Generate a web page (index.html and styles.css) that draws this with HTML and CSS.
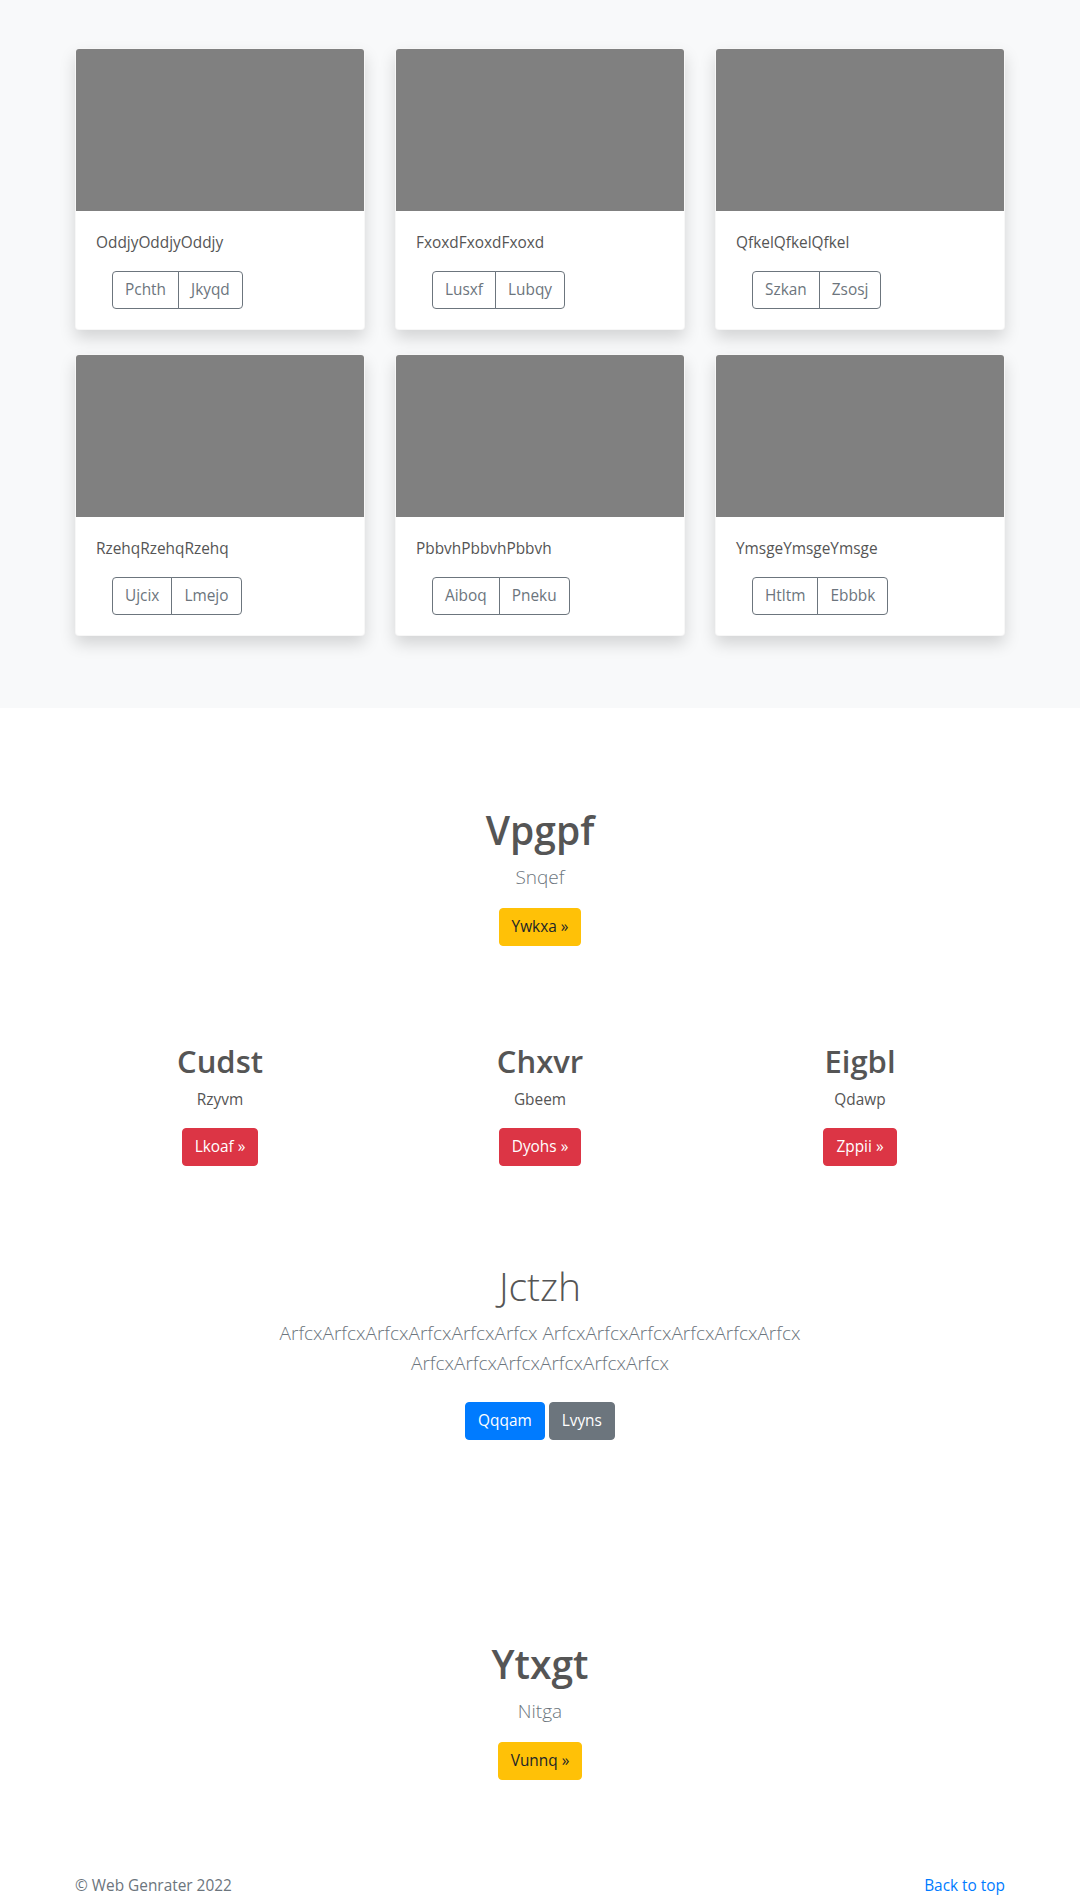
FILE: index.html
```html
<!DOCTYPE html>
<html lang="en">
<head>
<meta charset="utf-8">
<title>Album</title>
<link rel="stylesheet" href="styles.css">
</head>
<body>
<main>
  <section class="album">
    <div class="container card-grid">
      <div class="card"><div class="card-img"></div><div class="card-body"><p class="card-text">OddjyOddjyOddjy</p><div class="btn-group"><button class="btn-outline">Pchth</button><button class="btn-outline">Jkyqd</button></div></div></div>
      <div class="card"><div class="card-img"></div><div class="card-body"><p class="card-text">FxoxdFxoxdFxoxd</p><div class="btn-group"><button class="btn-outline">Lusxf</button><button class="btn-outline">Lubqy</button></div></div></div>
      <div class="card"><div class="card-img"></div><div class="card-body"><p class="card-text">QfkelQfkelQfkel</p><div class="btn-group"><button class="btn-outline">Szkan</button><button class="btn-outline">Zsosj</button></div></div></div>
      <div class="card"><div class="card-img"></div><div class="card-body"><p class="card-text">RzehqRzehqRzehq</p><div class="btn-group"><button class="btn-outline">Ujcix</button><button class="btn-outline">Lmejo</button></div></div></div>
      <div class="card"><div class="card-img"></div><div class="card-body"><p class="card-text">PbbvhPbbvhPbbvh</p><div class="btn-group"><button class="btn-outline">Aiboq</button><button class="btn-outline">Pneku</button></div></div></div>
      <div class="card"><div class="card-img"></div><div class="card-body"><p class="card-text">YmsgeYmsgeYmsge</p><div class="btn-group"><button class="btn-outline">Htltm</button><button class="btn-outline">Ebbbk</button></div></div></div>
    </div>
  </section>

  <section class="jumbo jumbo-first">
    <h1 class="title-bold">Vpgpf</h1>
    <p class="lead muted">Snqef</p>
    <a class="btn btn-warning" href="#">Ywkxa »</a>
  </section>

  <section class="container features">
    <div class="feature">
      <h2 class="feature-title">Cudst</h2>
      <p class="feature-text">Rzyvm</p>
      <a class="btn btn-danger" href="#">Lkoaf »</a>
    </div>
    <div class="feature">
      <h2 class="feature-title">Chxvr</h2>
      <p class="feature-text">Gbeem</p>
      <a class="btn btn-danger" href="#">Dyohs »</a>
    </div>
    <div class="feature">
      <h2 class="feature-title">Eigbl</h2>
      <p class="feature-text">Qdawp</p>
      <a class="btn btn-danger" href="#">Zppii »</a>
    </div>
  </section>

  <section class="hero">
    <h1 class="title-light">Jctzh</h1>
    <p class="lead muted hero-text">ArfcxArfcxArfcxArfcxArfcxArfcx ArfcxArfcxArfcxArfcxArfcxArfcx ArfcxArfcxArfcxArfcxArfcxArfcx</p>
    <p class="hero-actions"><a class="btn btn-primary" href="#">Qqqam</a> <a class="btn btn-secondary" href="#">Lvyns</a></p>
  </section>

  <section class="jumbo jumbo-second">
    <h1 class="title-bold">Ytxgt</h1>
    <p class="lead muted">Nitga</p>
    <a class="btn btn-warning" href="#">Vunnq »</a>
  </section>
</main>

<footer class="footer">
  <div class="container footer-inner">
    <p class="footer-copy">© Web Genrater 2022</p>
    <a class="footer-link" href="#">Back to top</a>
  </div>
</footer>
</body>
</html>
```

FILE: styles.css
```css
* { box-sizing: border-box; }

html, body {
  margin: 0;
  padding: 0;
}

body {
  font-family: "Segoe UI", "Open Sans", "Noto Sans", sans-serif;
  font-size: 15.4px;
  line-height: 24px;
  color: #555555;
  background: #ffffff;
}

p { margin: 0; }
h1, h2 { margin: 0; }

.container {
  width: 930px;
  margin: 0 auto;
}

/* Album */
.album {
  background: #f8f9fa;
  padding: 48px 0 72px;
}

.card-grid {
  display: grid;
  grid-template-columns: repeat(3, 290px);
  column-gap: 30px;
  row-gap: 24px;
}

.card {
  background: #ffffff;
  border: 1px solid rgba(0, 0, 0, 0.03);
  border-radius: 4px;
  box-shadow: 0 8px 16px rgba(0, 0, 0, 0.15);
  overflow: hidden;
}

.card-img {
  height: 162px;
  background: #808080;
}

.card-body {
  padding: 20px;
}

.card-text {
  margin-bottom: 16px;
}

.btn-group {
  display: inline-flex;
  margin-left: 16px;
}

.btn-outline {
  font-family: inherit;
  font-size: 15.4px;
  line-height: 24px;
  padding: 6px 12px;
  color: #6c757d;
  background: transparent;
  border: 1px solid #6c757d;
  margin: 0;
}

.btn-outline:first-child {
  border-radius: 4px 0 0 4px;
}

.btn-outline:last-child {
  border-radius: 0 4px 4px 0;
  margin-left: -1px;
}

/* Buttons */
.btn {
  display: inline-block;
  font-size: 15.4px;
  line-height: 24px;
  padding: 6px 12px;
  border: 1px solid transparent;
  border-radius: 4px;
  text-decoration: none;
  vertical-align: middle;
}

.btn-warning { background: #ffc107; border-color: #ffc107; color: #212529; }
.btn-danger { background: #dc3545; border-color: #dc3545; color: #ffffff; }
.btn-primary { background: #007bff; border-color: #007bff; color: #ffffff; }
.btn-secondary { background: #6c757d; border-color: #6c757d; color: #ffffff; }

/* Jumbotrons */
.jumbo {
  text-align: center;
}

.jumbo-first {
  padding-top: 98px;
}

.jumbo-second {
  padding-top: 176px;
}

.title-bold {
  font-size: 39px;
  line-height: 48px;
  font-weight: 600;
  margin-bottom: 8px;
}

.title-light {
  font-size: 39px;
  line-height: 48px;
  font-weight: 300;
  margin-bottom: 8px;
}

.lead {
  font-size: 19px;
  line-height: 30px;
  font-weight: 300;
  margin-bottom: 16px;
}

.muted { color: #6c757d; }

/* Features */
.features {
  display: grid;
  grid-template-columns: repeat(3, 290px);
  column-gap: 30px;
  padding-top: 96px;
  text-align: center;
}

.feature-title {
  font-size: 31px;
  line-height: 38px;
  font-weight: 600;
  margin-bottom: 8px;
}

.feature-text {
  margin-bottom: 16px;
}

/* Hero */
.hero {
  text-align: center;
  padding-top: 96px;
  width: 610px;
  margin: 0 auto;
}

.hero-actions {
  margin-bottom: 16px;
}

.hero-actions .btn {
  margin: 8px 0;
}

/* Footer */
.footer {
  padding-top: 94px;
  padding-bottom: 48px;
  color: #6c757d;
}

.footer-inner {
  display: flex;
  justify-content: space-between;
  align-items: flex-start;
}

.footer-link {
  color: #007bff;
  text-decoration: none;
}
```
